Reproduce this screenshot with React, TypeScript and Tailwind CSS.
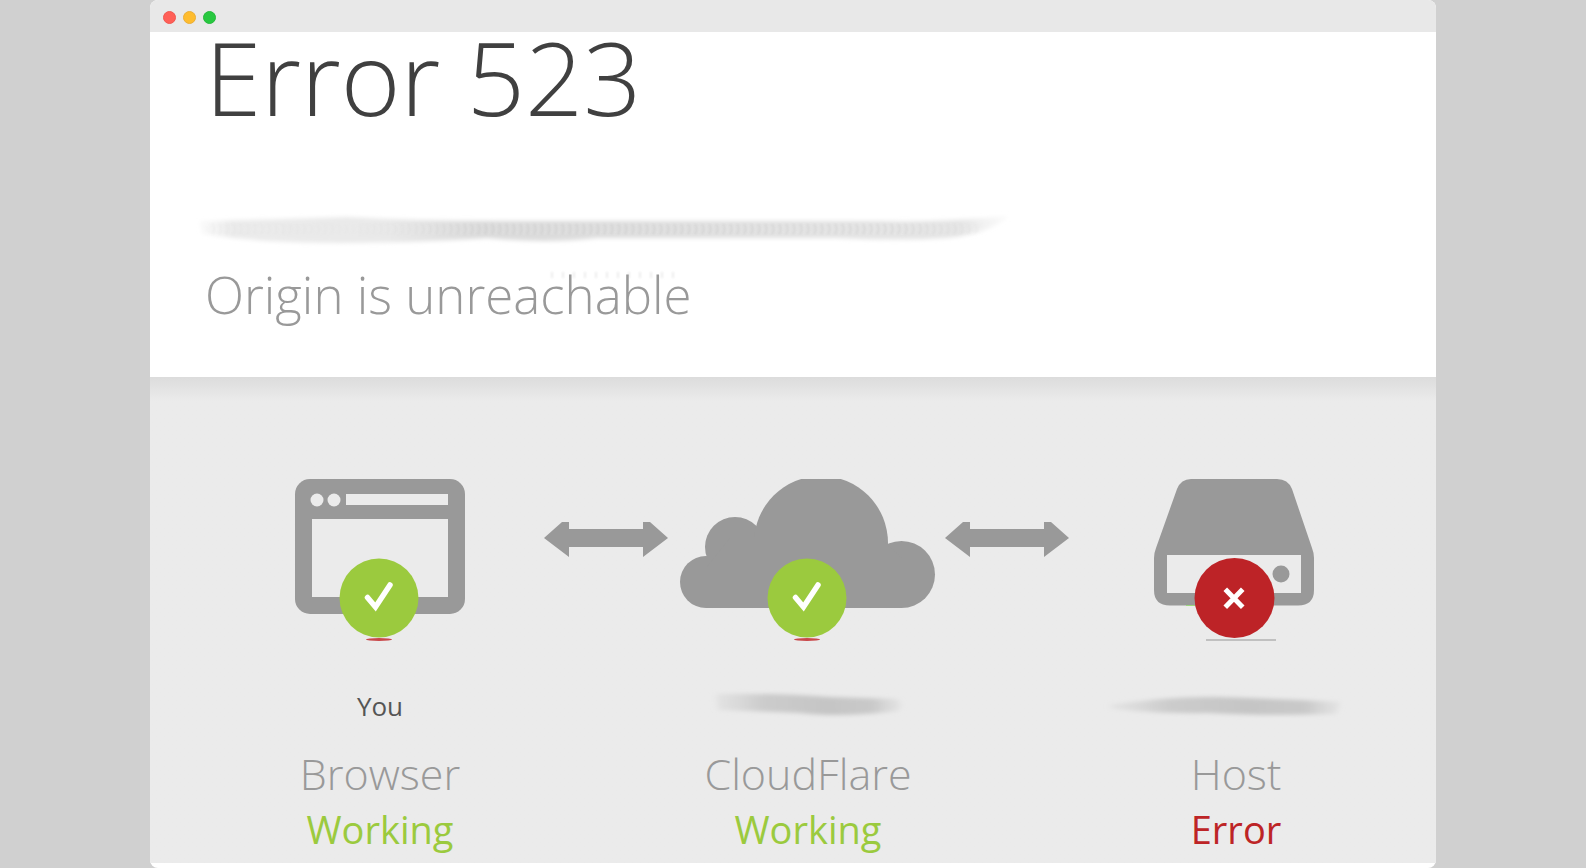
import React from 'react';

type Status = 'working' | 'error';

interface StageProps {
  icon: React.ReactNode;
  label: React.ReactNode;
  name: string;
  status: Status;
}

const CheckBadge: React.FC = () => (
  <g>
    <ellipse cx="127" cy="161.500" rx="13" ry="1.500" fill="#c9484a" />
    <circle cx="127" cy="120" r="39.500" fill="#9bca3e" />
    <path d="M115.500 119.500L123.500 129L138 107" fill="none" stroke="#fff" strokeWidth="5.500" strokeLinecap="round" />
  </g>
);

const BrowserIcon: React.FC = () => (
  <svg viewBox="0 0 256 164" className="block h-[164px] w-64" aria-hidden="true">
    <rect x="43" y="1" width="170" height="135" rx="15" fill="#999" />
    <circle cx="65" cy="22" r="6.500" fill="#ebebeb" />
    <circle cx="82" cy="22" r="6.500" fill="#ebebeb" />
    <rect x="94" y="16" width="102" height="11" fill="#ebebeb" />
    <rect x="60" y="41" width="136" height="78" fill="#ebebeb" />
    <CheckBadge />
  </svg>
);

const CloudIcon: React.FC = () => (
  <svg viewBox="0 0 256 164" className="block h-[164px] w-64" aria-hidden="true">
    <defs>
      <clipPath id="cloud-top">
        <rect y="1" width="256" height="163" />
      </clipPath>
    </defs>
    <g fill="#999" clipPath="url(#cloud-top)">
      <circle cx="26" cy="104" r="26" />
      <circle cx="55" cy="69" r="30" />
      <circle cx="141" cy="65" r="67" />
      <circle cx="221.500" cy="96.500" r="33.500" />
      <path d="M26 130V90L50 60H200L222 80V130Z" />
    </g>
    <CheckBadge />
  </svg>
);

const ServerIcon: React.FC = () => (
  <svg viewBox="0 0 256 164" className="block h-[164px] w-64" aria-hidden="true">
    <path
      d="M83 1H169Q180 1 184 11L204 70Q206 75 206 80V112Q206 127.500 190 127.500H62Q46 127.500 46 112V80Q46 75 48 70L69 11Q73 1 83 1Z"
      fill="#999"
    />
    <rect x="59" y="77" width="134" height="38" fill="#ebebeb" />
    <circle cx="173" cy="96" r="8.500" fill="#999" />
    <rect x="78" y="127" width="9" height="1" fill="#9bd67c" />
    <rect x="98" y="161" width="70" height="2" fill="#c0c0c0" />
    <circle cx="126.500" cy="120" r="40" fill="#bd2327" />
    <path d="M119 113L133 127.500M133 113L119 127.500" stroke="#fff" strokeWidth="5" strokeLinecap="square" />
  </svg>
);

const Arrow: React.FC = () => (
  <svg viewBox="0 0 124 36" className="mt-[43px] block h-9 w-[124px] shrink-0" aria-hidden="true">
    <path d="M0 17L18 1H25V8H99V1H106L124 17L99 36V26H25V36Z" fill="#999" />
  </svg>
);

// Hostname painted over with a soft brush
const AddressSmudge: React.FC = () => (
  <svg viewBox="0 0 820 42" className="mt-[89px] -ml-2 block h-[42px] w-[820px] overflow-visible" aria-hidden="true">
    <defs>
      <linearGradient id="address-fade">
        <stop offset="0" stopColor="#f2f2f2" stopOpacity=".4" />
        <stop offset=".04" stopColor="#ebebeb" />
        <stop offset=".23" stopColor="#e9e9e9" />
        <stop offset=".35" stopColor="#dadada" />
        <stop offset=".8" stopColor="#e3e3e3" />
        <stop offset=".94" stopColor="#e5e5e5" />
        <stop offset="1" stopColor="#f4f4f4" stopOpacity=".4" />
      </linearGradient>
      <linearGradient id="grain-fade">
        <stop offset="0" stopColor="#fff" stopOpacity=".3" />
        <stop offset=".2" stopColor="#fff" stopOpacity=".1" />
        <stop offset=".35" stopColor="#fff" stopOpacity=".9" />
        <stop offset=".85" stopColor="#fff" stopOpacity=".9" />
        <stop offset="1" stopColor="#fff" stopOpacity="0" />
      </linearGradient>
      <pattern id="grain" width="7" height="14" patternUnits="userSpaceOnUse">
        <path d="M1 2Q5 7 1 12" fill="none" stroke="#c4c4c4" strokeWidth="1.500" />
        <path d="M5 1V13" stroke="#f0f0f0" strokeWidth="1" />
      </pattern>
      <mask id="grain-mask">
        <rect width="820" height="42" fill="url(#grain-fade)" />
      </mask>
      <filter id="soft" x="-5%" y="-50%" width="110%" height="200%">
        <feGaussianBlur stdDeviation="2" />
      </filter>
      <filter id="grain-soft" x="-5%" y="-5" width="110%" height="80" filterUnits="userSpaceOnUse">
        <feGaussianBlur stdDeviation="0.800" />
      </filter>
    </defs>
    <path
      d="M3 13Q90 11 150 9Q220 13 300 13H680Q740 15 812 8Q792 26 750 30Q700 33 640 30H400Q350 36 290 30Q160 38 70 33Q30 30 5 26Z"
      fill="url(#address-fade)"
      filter="url(#soft)"
    />
    <g mask="url(#grain-mask)">
      <rect x="10" y="14" width="775" height="14" fill="url(#grain)" opacity=".45" filter="url(#grain-soft)" />
    </g>
    <path d="M354 67H480" stroke="#ececec" strokeWidth="6" strokeDasharray="2 9" filter="url(#grain-soft)" />
  </svg>
);

interface LabelSmudgeProps {
  id: string;
  path: string;
}

const LabelSmudge: React.FC<LabelSmudgeProps> = ({ id, path }) => (
  <svg viewBox="0 0 256 32" className="block h-8 w-64 overflow-visible" aria-hidden="true">
    <defs>
      <linearGradient id={`${id}-fade`}>
        <stop offset="0" stopColor="#d6d6d6" stopOpacity=".4" />
        <stop offset=".25" stopColor="#cccccc" />
        <stop offset=".6" stopColor="#c5c5c5" />
        <stop offset=".85" stopColor="#c9c9c9" />
        <stop offset="1" stopColor="#d6d6d6" stopOpacity=".4" />
      </linearGradient>
      <filter id={`${id}-soft`} x="-10%" y="-50%" width="120%" height="200%">
        <feGaussianBlur stdDeviation="3 2" />
      </filter>
    </defs>
    <path d={path} fill={`url(#${id}-fade)`} filter={`url(#${id}-soft)`} />
  </svg>
);

const Stage: React.FC<StageProps> = ({ icon, label, name, status }) => (
  <div className="flex w-64 shrink-0 flex-col items-center text-center">
    {icon}
    <div className="mt-12 h-8 text-[26px] leading-8 text-[#555]">{label}</div>
    <h3 className="mt-6 text-[43px] leading-[56px] font-light text-[#999]">{name}</h3>
    <p className={`mt-[3px] text-[38px] leading-[48px] ${status === 'working' ? 'text-[#9bca3e]' : 'text-[#bd2426]'}`}>
      {status === 'working' ? 'Working' : 'Error'}
    </p>
  </div>
);

const App: React.FC = () => {
  return (
    <div className="min-h-screen bg-[#d0d0d0] px-[150px] font-['Open_Sans','Noto_Sans',sans-serif]">
      <div className="overflow-hidden rounded-lg bg-white pb-[5px]">
        {/* Window title bar */}
        <div className="flex h-8 items-center gap-[7px] bg-[#e8e8e8] pt-[2px] pl-[13px]">
          <span className="h-[13px] w-[13px] rounded-full border border-[#f0574f] bg-[#ff5f57]" />
          <span className="h-[13px] w-[13px] rounded-full border border-[#eaae36] bg-[#febc2e]" />
          <span className="h-[13px] w-[13px] rounded-full border border-[#25b93b] bg-[#28c840]" />
        </div>

        {/* Error heading */}
        <header className="pt-[3px] pb-[53px] pl-[55px]">
          <h1 className="text-[102px] leading-[84px] font-light text-[#404040]">Error 523</h1>
          <AddressSmudge />
          <h2 className="mt-[14px] text-[51px] leading-[60px] font-light text-[#999]">Origin is unreachable</h2>
        </header>

        {/* Connection diagram */}
        <main className="bg-[#ebebeb] bg-linear-to-b from-[#dcdcdc] to-[#ebebeb] to-[24px] pt-[101px] pr-[72px] pb-[10px] pl-[102px]">
          <div className="flex">
            <Stage icon={<BrowserIcon />} label="You" name="Browser" status="working" />
            <div className="flex flex-1 justify-end pr-3">
              <Arrow />
            </div>
            <Stage
              icon={<CloudIcon />}
              label={<LabelSmudge id="cloud" path="M36 4Q100 3 150 7L217 9Q224 15 218 21Q160 28 120 23L38 20Z" />}
              name="CloudFlare"
              status="working"
            />
            <div className="flex flex-1 justify-start pr-[3px] pl-[9px]">
              <Arrow />
            </div>
            <Stage
              icon={<ServerIcon />}
              label={<LabelSmudge id="host" path="M2 15Q60 6 110 7Q170 9 232 12L228 24Q150 26 100 23Q40 24 2 18Z" />}
              name="Host"
              status="error"
            />
          </div>
        </main>
      </div>
    </div>
  );
};

export default App;
